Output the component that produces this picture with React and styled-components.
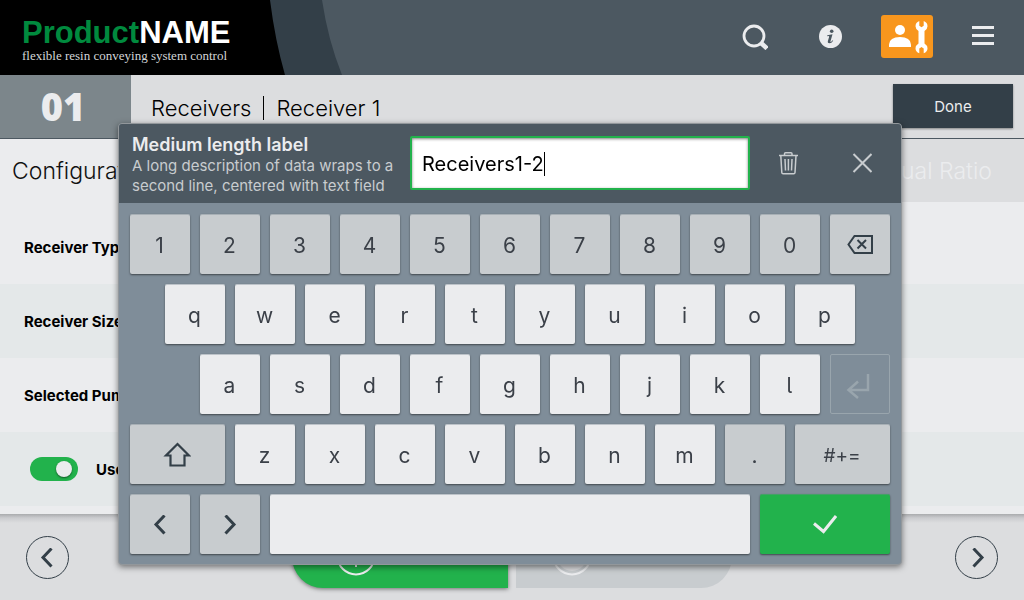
import React, { useState } from "react";
import styled, { createGlobalStyle } from "styled-components";

const GlobalStyle = createGlobalStyle`
  :root {
    --sans: Inter, "Liberation Sans", sans-serif;
    --slate: #4c5861;
    --slate-dark: #333f48;
    --grey-100: #ebecee;
    --grey-200: #dcdddf;
    --grey-300: #c8cccf;
    --green: #22b24c;
  }

  * {
    box-sizing: border-box;
  }

  body {
    margin: 0;
    font-family: var(--sans);
    background-color: var(--grey-200);
    color: #000;
  }

  button,
  input {
    font-family: inherit;
    color: inherit;
    margin: 0;
  }

  svg {
    display: block;
  }
`;

const Page = styled.div`
  display: flex;
  flex-direction: column;
  min-height: 100vh;
  overflow: hidden;
`;

const Header = styled.header`
  display: flex;
  justify-content: space-between;
  height: 75px;
  background-color: var(--slate);
`;

const Brand = styled.div`
  display: grid;
  width: 342px;

  > * {
    grid-area: 1 / 1;
  }
`;

const BrandText = styled.div`
  padding: 16px 0 0 22px;
`;

const BrandName = styled.div`
  font-family: "Liberation Sans", sans-serif;
  font-size: 31px;
  line-height: 34px;
  font-weight: 700;
  color: #fff;

  span {
    color: #008a3e;
  }
`;

const Tagline = styled.div`
  font-family: "Liberation Serif", serif;
  font-size: 13px;
  line-height: 12px;
  color: #d4d6d8;
`;

const Tools = styled.nav`
  display: flex;
  align-items: center;
  gap: 24px;
  padding: 0 15px 2px 0;
`;

const Tool = styled.button`
  display: flex;
  align-items: center;
  justify-content: center;
  width: 52px;
  height: 43px;
  padding: 0;
  border: 0;
  border-radius: 3px;
  color: var(--grey-100);
  background-color: ${({ $active }) => ($active ? "#f8961d" : "transparent")};
`;

const SubHeader = styled.div`
  display: flex;
  align-items: stretch;
  height: 64px;
  border-bottom: 1px solid var(--slate);
`;

const Step = styled.div`
  display: flex;
  align-items: center;
  justify-content: center;
  width: 131px;
  padding: 0 5px 2px 0;
  font-family: "Open Sans", sans-serif;
  font-size: 38px;
  font-weight: 800;
  color: var(--grey-100);
  background-color: #7c868b;
`;

const Crumbs = styled.h1`
  display: flex;
  align-items: center;
  flex: 1;
  margin: 0;
  padding: 2px 0 0 20px;
  font-size: 22px;
  font-weight: 300;
`;

const Divider = styled.span`
  width: 1px;
  height: 24px;
  margin: 0 12px;
  background-color: #000;
`;

const Done = styled.button`
  align-self: center;
  width: 120px;
  height: 44px;
  margin: 0 11px 2px 0;
  padding-top: 3px;
  border: 0;
  font-size: 15px;
  color: var(--grey-100);
  background-color: var(--slate-dark);
  box-shadow: 0 1px 2px rgba(0, 0, 0, 0.4);
`;

const Tabs = styled.div`
  display: flex;
  justify-content: space-between;
  height: 63px;
  background-color: var(--grey-200);
`;

const Tab = styled.button`
  padding: 0 ${({ $active }) => ($active ? "12px" : "32px")};
  border: 0;
  font-size: 23px;
  font-weight: 300;
  color: ${({ $active }) => ($active ? "#111" : "var(--grey-100)")};
  background-color: ${({ $active }) =>
    $active ? "var(--grey-100)" : "transparent"};
`;

const Settings = styled.main`
  flex: 1;
  padding: 8px 0;
  background-color: var(--grey-100);
`;

const Setting = styled.div`
  display: flex;
  align-items: center;
  gap: 18px;
  height: 74px;
  padding-left: ${({ $toggle }) => ($toggle ? "30px" : "24px")};
  font-size: 15px;
  font-weight: 700;
  background-color: ${({ $alt }) => ($alt ? "#e4e8e9" : "transparent")};
`;

const Toggle = styled.input`
  appearance: none;
  display: flex;
  align-items: center;
  justify-content: flex-end;
  width: 48px;
  height: 24px;
  padding: 0 6px;
  border-radius: 12px;
  background-color: var(--green);

  &::before {
    content: "";
    width: 16px;
    height: 16px;
    border-radius: 50%;
    background-color: var(--grey-100);
    box-shadow: 0 1px 2px rgba(0, 0, 0, 0.5);
  }

  &:not(:checked) {
    justify-content: flex-start;
    background-color: var(--grey-300);
  }
`;

const Footer = styled.footer`
  display: flex;
  align-items: center;
  justify-content: space-between;
  height: 86px;
  padding: 0 26px;
  background: linear-gradient(#a9abad, #cbcccf 4px, var(--grey-200) 9px);
`;

const RoundButton = styled.button`
  display: flex;
  align-items: center;
  justify-content: center;
  width: 43px;
  height: 43px;
  margin-top: 1px;
  padding: ${({ $back }) => ($back ? "0 2px 0 0" : "0 0 0 2px")};
  border: 1px solid var(--slate-dark);
  border-radius: 50%;
  color: var(--slate-dark);
  background-color: transparent;
`;

const Actions = styled.div`
  display: flex;
  gap: 8px;
`;

const Action = styled.button`
  display: flex;
  align-items: center;
  width: 216px;
  height: 62px;
  padding: 0 0 2px ${({ $primary }) => ($primary ? "44px" : "36px")};
  border: 0;
  border-radius: ${({ $primary }) =>
    $primary ? "31px 0 0 31px" : "0 31px 31px 0"};
  color: var(--grey-100);
  background-color: ${({ $primary }) =>
    $primary ? "var(--green)" : "var(--grey-300)"};
  box-shadow: ${({ $primary }) =>
    $primary ? "0 1px 4px rgba(0, 0, 0, 0.5)" : "none"};
`;

const Overlay = styled.div`
  position: fixed;
  inset: 0;
  display: flex;
  align-items: flex-start;
  justify-content: center;
  padding: 123px 4px 0 0;
`;

const Dialog = styled.section`
  width: 784px;
  max-width: 100%;
  border: 1px solid #92979b;
  border-radius: 4px;
  overflow: hidden;
  background-color: #7f8d99;
  box-shadow: 0 2px 6px rgba(0, 0, 0, 0.5);
`;

const DialogHeader = styled.div`
  display: flex;
  align-items: center;
  height: 79px;
  padding: 0 2px 2px 13px;
  background-color: var(--slate);
`;

const FieldLabel = styled.label`
  flex: 1;
  padding-top: 5px;
  font-size: 15px;
  line-height: 20px;
  color: var(--grey-300);

  strong {
    display: block;
    font-size: 18px;
    line-height: 22px;
    font-weight: 600;
    color: var(--grey-100);
  }
`;

const Field = styled.div`
  display: flex;
  align-items: center;
  width: 340px;
  height: 54px;
  margin-right: 1px;
  padding: 2px 0 0 10px;
  border: 2px solid var(--green);
  border-radius: 2px;
  background-color: #fff;
  box-shadow: inset 0 1px 3px rgba(0, 0, 0, 0.5);
`;

const FieldInput = styled.input`
  field-sizing: content;
  height: 40px;
  padding: 0;
  border: 0;
  outline: 0;
  font-size: 20px;
  color: #000;
  background-color: transparent;
`;

const Caret = styled.span`
  width: 1px;
  height: 24px;
  background-color: #000;
`;

const HeaderAction = styled.button`
  display: flex;
  align-items: center;
  justify-content: center;
  width: 74px;
  height: 54px;
  padding: 0;
  border: 0;
  color: var(--grey-300);
  background-color: transparent;
`;

const Keys = styled.div`
  display: grid;
  grid-template-columns: repeat(22, 1fr);
  grid-auto-rows: 60px;
  gap: 10px;
  padding: 11px 11px 10px;
`;

const keyColors = {
  light: "var(--grey-100)",
  dark: "var(--grey-300)",
  accept: "var(--green)",
  disabled: "transparent",
};

const Key = styled.button`
  display: flex;
  align-items: center;
  justify-content: center;
  grid-column: ${({ $start }) => $start || "auto"} / span
    ${({ $span }) => $span || 2};
  padding: 2px 1px 0 0;
  border: ${({ $tone }) => ($tone === "disabled" ? "1px solid #99a5ad" : "0")};
  border-radius: 2px;
  font-size: ${({ $small }) => ($small ? "19px" : "21px")};
  font-feature-settings: "cv05";
  color: ${({ $tone }) =>
    ({ accept: "var(--grey-100)", disabled: "#99a5ad" })[$tone] || "#3b4048"};
  background-color: ${({ $tone }) => keyColors[$tone]};
  box-shadow: ${({ $tone }) =>
    $tone === "disabled"
      ? "none"
      : "0 1px 2px rgba(0, 0, 0, 0.5), inset 0 1px 0 rgba(120, 135, 145, 0.4)"};
`;

const BrandShape = () => (
  <svg width="342" height="75" viewBox="0 0 342 75" aria-hidden="true">
    <path d="M0 0H322Q328 40 342 75H0Z" fill="#333f48" />
    <path d="M0 0H270Q275 40 285 75H0Z" fill="#000" />
  </svg>
);

const SearchIcon = () => (
  <svg width="26" height="26" viewBox="0 0 26 26" fill="none" stroke="currentColor">
    <circle cx="12" cy="12" r="10" strokeWidth="2.8" />
    <path d="M19 19L25 24.5" strokeWidth="4.5" />
  </svg>
);

const InfoIcon = () => (
  <svg width="24" height="24" viewBox="0 0 24 24">
    <circle cx="11.5" cy="11.5" r="11.5" fill="currentColor" />
    <circle cx="12.7" cy="6.2" r="1.8" fill="#4c5861" />
    <path
      d="M8.3 10.3L13.5 9.3L11.5 16.3Q11.3 17.2 11.9 16.9Q12.7 16.4 13.5 15.2L14.2 15.7Q12.5 18.3 10.4 18.3Q8.3 18.3 8.8 16.3L10.1 11.9Q10.3 11.1 9.5 11.1L8.2 11.2Z"
      fill="#4c5861"
    />
  </svg>
);

const UserToolsIcon = () => (
  <svg width="52" height="43" viewBox="0 0 52 43" fill="#fff">
    <circle cx="19" cy="15" r="5" />
    <path d="M8 32V29.5Q8.5 22 19 22Q29.5 22 30 29.5V32Z" />
    <path d="M38.3 6V10.8L40.5 12.2L42.7 10.8V6Q46.5 7.5 46.5 11.2Q46.5 14 43.5 16V28.5Q46.5 30.5 46.5 33.2Q46.5 36.8 42.7 38.2V33.5L40.5 32L38.3 33.5V38.2Q34.5 36.8 34.5 33.2Q34.5 30.5 37.5 28.5V16Q34.5 14 34.5 11.2Q34.5 7.5 38.3 6Z" />
  </svg>
);

const MenuIcon = () => (
  <svg width="22" height="22" viewBox="0 0 22 22" fill="currentColor">
    <path d="M0 0H22V3H0ZM0 8H22V11H0ZM0 16H22V19H0Z" />
  </svg>
);

const TrashIcon = () => (
  <svg width="20" height="24" viewBox="0 0 20 24" fill="none" stroke="currentColor" strokeWidth="1.5">
    <path d="M1 4.5H20M6.5 4V2.7Q6.5 1.7 7.5 1.7H13Q14 1.7 14 2.7V4" />
    <path d="M2.8 4.5L3.8 21.5Q3.9 22.8 5.1 22.8H15.7Q16.9 22.8 17 21.5L18 4.5" />
    <path d="M7 8L7.500 19.500M10.400 8V19.500M14 8L13.500 19.500" />
  </svg>
);

const CloseIcon = () => (
  <svg width="20" height="20" viewBox="0 0 20 20" fill="none" stroke="currentColor" strokeWidth="2">
    <path d="M1.5 1L19.5 19M19.5 1L1.5 19" />
  </svg>
);

const BackspaceIcon = () => (
  <svg width="28" height="22" viewBox="0 0 28 22" fill="none" stroke="#333f48" strokeWidth="2">
    <path d="M8.5 2H26V19H8.5L2.5 10.5Z" />
    <path d="M11.5 6L20 14.5M20 6L11.5 14.5" />
  </svg>
);

const EnterIcon = () => (
  <svg width="28" height="28" viewBox="0 0 28 28" fill="none" stroke="currentColor" strokeWidth="2.5">
    <path d="M22 3V19H3M12 10.5L2.5 19L12 27" />
  </svg>
);

const ShiftIcon = () => (
  <svg width="28" height="26" viewBox="0 0 28 26" fill="none" stroke="#333f48" strokeWidth="2.2">
    <path d="M14.5 2L26 13.500H21.500V23.500H7.500V13.500H3Z" />
  </svg>
);

const Chevron = ({ back }) => (
  <svg width="14" height="20" viewBox="0 0 14 20" fill="none" stroke="#333f48" strokeWidth="3">
    <path d={back ? "M11.5 0.5L3 9.5L11.5 18.5" : "M2.5 0.5L11 9.5L2.5 18.5"} />
  </svg>
);

const CheckIcon = () => (
  <svg width="24" height="20" viewBox="0 0 24 20" fill="none" stroke="currentColor" strokeWidth="3">
    <path d="M1 8.5L10.500 16.500L23 1" />
  </svg>
);

const StartIcon = () => (
  <svg width="40" height="40" viewBox="0 0 40 40" fill="none" stroke="currentColor" strokeWidth="2">
    <circle cx="20" cy="20" r="18.5" />
    <path d="M20 9V31" />
  </svg>
);

const StopIcon = () => (
  <svg width="40" height="40" viewBox="0 0 40 40" fill="none" stroke="currentColor" strokeWidth="2">
    <circle cx="20" cy="20" r="18.5" />
    <circle cx="20" cy="20" r="15" fill="#dcdddf" stroke="none" />
  </svg>
);

const App = () => {
  const [value, setValue] = useState("Receivers1-2");
  const type = (char) => setValue((current) => current + char);

  const charKeys = (chars, tone, start) =>
    chars.split("").map((char, index) => (
      <Key
        key={char}
        type="button"
        $tone={tone}
        $start={index === 0 ? start : undefined}
        onClick={() => type(char)}
      >
        {char}
      </Key>
    ));

  return (
    <>
      <GlobalStyle />
      <Page>
        <Header>
          <Brand>
            <BrandShape />
            <BrandText>
              <BrandName>
                <span>Product</span>NAME
              </BrandName>
              <Tagline>flexible resin conveying system control</Tagline>
            </BrandText>
          </Brand>
          <Tools>
            <Tool type="button" aria-label="Search">
              <SearchIcon />
            </Tool>
            <Tool type="button" aria-label="Information">
              <InfoIcon />
            </Tool>
            <Tool type="button" aria-label="Service user" $active>
              <UserToolsIcon />
            </Tool>
            <Tool type="button" aria-label="Menu">
              <MenuIcon />
            </Tool>
          </Tools>
        </Header>

        <SubHeader>
          <Step>01</Step>
          <Crumbs>
            Receivers
            <Divider />
            Receiver 1
          </Crumbs>
          <Done type="button">Done</Done>
        </SubHeader>

        <Tabs>
          <Tab type="button" $active>
            Configuration
          </Tab>
          <Tab type="button">Manual Ratio</Tab>
        </Tabs>

        <Settings>
          <Setting>Receiver Type</Setting>
          <Setting $alt>Receiver Size</Setting>
          <Setting>Selected Pump</Setting>
          <Setting $alt $toggle>
            <Toggle type="checkbox" id="use" defaultChecked />
            <label htmlFor="use">Use</label>
          </Setting>
        </Settings>

        <Footer>
          <RoundButton type="button" aria-label="Previous" $back>
            <Chevron back />
          </RoundButton>
          <Actions>
            <Action type="button" aria-label="Start" $primary>
              <StartIcon />
            </Action>
            <Action type="button" aria-label="Stop">
              <StopIcon />
            </Action>
          </Actions>
          <RoundButton type="button" aria-label="Next">
            <Chevron />
          </RoundButton>
        </Footer>
      </Page>

      <Overlay>
        <Dialog role="dialog" aria-label="Keyboard">
          <DialogHeader>
            <FieldLabel htmlFor="value">
              <strong>Medium length label</strong>A long description of data
              wraps to a second line, centered with text field
            </FieldLabel>
            <Field>
              <FieldInput
                id="value"
                value={value}
                onChange={(event) => setValue(event.target.value)}
              />
              <Caret />
            </Field>
            <HeaderAction type="button" aria-label="Clear" onClick={() => setValue("")}>
              <TrashIcon />
            </HeaderAction>
            <HeaderAction type="button" aria-label="Close">
              <CloseIcon />
            </HeaderAction>
          </DialogHeader>
          <Keys>
            {charKeys("1234567890", "dark", 1)}
            <Key
              type="button"
              aria-label="Backspace"
              $tone="dark"
              onClick={() => setValue(value.slice(0, -1))}
            >
              <BackspaceIcon />
            </Key>
            {charKeys("qwertyuiop", "light", 2)}
            {charKeys("asdfghjkl", "light", 3)}
            <Key type="button" aria-label="Enter" $tone="disabled" disabled>
              <EnterIcon />
            </Key>
            <Key type="button" aria-label="Shift" $tone="dark" $start={1} $span={3}>
              <ShiftIcon />
            </Key>
            {charKeys("zxcvbnm", "light")}
            {charKeys(".", "dark")}
            <Key type="button" $tone="dark" $span={3} $small>
              #+=
            </Key>
            <Key type="button" aria-label="Move left" $tone="dark" $start={1}>
              <Chevron back />
            </Key>
            <Key type="button" aria-label="Move right" $tone="dark">
              <Chevron />
            </Key>
            <Key
              type="button"
              aria-label="Space"
              $tone="light"
              $span={14}
              onClick={() => type(" ")}
            />
            <Key type="button" aria-label="Accept" $tone="accept" $span={4}>
              <CheckIcon />
            </Key>
          </Keys>
        </Dialog>
      </Overlay>
    </>
  );
};

export default App;
